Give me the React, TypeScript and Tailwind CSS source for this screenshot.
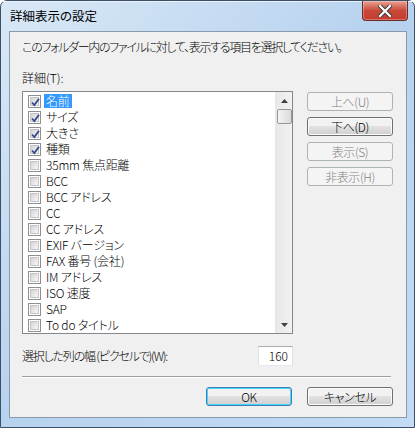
import React from 'react';

const FONT = { fontFamily: '"Noto Sans CJK JP", "Liberation Sans", sans-serif', fontFeatureSettings: '"palt"' };

const ITEMS: { label: string; checked: boolean }[] = [
  { label: '名前', checked: true },
  { label: 'サイズ', checked: true },
  { label: '大きさ', checked: true },
  { label: '種類', checked: true },
  { label: '35mm 焦点距離', checked: false },
  { label: 'BCC', checked: false },
  { label: 'BCC アドレス', checked: false },
  { label: 'CC', checked: false },
  { label: 'CC アドレス', checked: false },
  { label: 'EXIF バージョン', checked: false },
  { label: 'FAX 番号 (会社)', checked: false },
  { label: 'IM アドレス', checked: false },
  { label: 'ISO 速度', checked: false },
  { label: 'SAP', checked: false },
  { label: 'To do タイトル', checked: false },
];

function CheckBox({ checked }: { checked: boolean }) {
  return (
    <div className="w-[13px] h-[13px] border border-[#8f8f8f] bg-white p-px shrink-0">
      <div className="relative w-full h-full border border-[#c4c4c4] bg-gradient-to-br from-[#d4d4d4] to-[#f7f7f7]">
        {checked && (
          <svg className="absolute -left-px -top-px" width="11" height="11" viewBox="0 0 11 11">
            <path d="M2 5.5 L4.3 8 L9 1.8" stroke="#33488f" strokeWidth="1.8" fill="none" />
          </svg>
        )}
      </div>
    </div>
  );
}

function Button({ label, disabled, isDefault, className }: { label: string; disabled?: boolean; isDefault?: boolean; className?: string }) {
  if (disabled) {
    return (
      <div className={`h-[19px] w-[86px] rounded-[3px] border border-[#adb2b5] bg-[#f4f4f4] flex items-center justify-center text-[12px] text-[#838383] tracking-[-0.4px] ${className ?? ''}`}>
        {label}
      </div>
    );
  }
  return (
    <div
      className={`h-[19px] w-[86px] rounded-[3px] border ${isDefault ? 'border-[#3c7fb1] shadow-[inset_0_0_0_1px_#48d2ff]' : 'border-[#707070] shadow-[inset_0_0_0_1px_#fcfcfc]'} bg-gradient-to-b from-[#f2f2f2] from-45% via-[#e2e2e2] via-50% to-[#cfcfcf] flex items-center justify-center text-[12px] text-black tracking-[-0.4px] ${className ?? ''}`}
    >
      {label}
    </div>
  );
}

export default function App() {
  return (
    <div className="w-[415px] h-[428px] bg-white">
      <div
        className="w-[415px] h-[428px] rounded-t-[7px] border border-[#3c4f66] bg-gradient-to-br from-[#d9e8f6] via-[#b7d2ef] to-[#c3dbf4] flex flex-col text-[12px] text-black font-light"
        style={FONT}
      >
        {/* title bar */}
        <div className="h-[30px] flex items-start justify-between pl-[9px] pr-[6px] shadow-[inset_0_1px_0_#eaf3fc]">
          <span className="mt-[7px] text-[12.5px] leading-[16px] font-normal">詳細表示の設定</span>
          <div className="w-[46px] h-[20px] rounded-b-[4px] border border-t-0 border-[#6e2a25] bg-gradient-to-b from-[#e8a293] via-[#c8483a] to-[#c43c2e] flex items-center justify-center shadow-[inset_0_0_0_1px_rgba(255,255,255,0.3)]">
            <svg width="14" height="12" viewBox="0 0 14 12">
              <path d="M2 1 L12 11 M12 1 L2 11" stroke="#3b3b3b" strokeWidth="4.2" strokeLinecap="square" />
              <path d="M2 1 L12 11 M12 1 L2 11" stroke="#ffffff" strokeWidth="2.2" strokeLinecap="square" />
            </svg>
          </div>
        </div>

        {/* client area */}
        <div className="ml-[8px] mr-[7px] h-[387px] border border-[#8a9aad] bg-[#f0f0f0] pl-[12px] pr-[12px]">
          <div className="mt-[7px] leading-[16px] tracking-[-1.3px] whitespace-nowrap">このフォルダー内のファイルに対して、表示する項目を選択してください。</div>
          <div className="mt-[15px] leading-[16px]">詳細(T):</div>

          <div className="mt-[5px] flex gap-[14px]">
            <div className="w-[271px] h-[243px] border border-[#828790] bg-white flex">
              <div className="flex-1 pt-px">
                {ITEMS.map((it, i) => (
                  <div key={it.label} className="h-[16px] flex items-center pl-[5px] gap-[3px]">
                    <CheckBox checked={it.checked} />
                    <span className={`px-[2px] leading-[14px] tracking-[-0.2px] ${i === 0 ? 'bg-[#3399ff] text-white' : ''}`}>{it.label}</span>
                  </div>
                ))}
              </div>
              <div className="w-[17px] bg-gradient-to-r from-[#e8e8e8] to-[#f2f2f2] border-l border-[#e6e6e6] flex flex-col items-center">
                <div className="h-[17px] flex items-center justify-center">
                  <svg width="7" height="4" viewBox="0 0 7 4"><path d="M3.5 0 L7 4 L0 4 Z" fill="#404040" /></svg>
                </div>
                <div className="w-[15px] h-[15px] rounded-[2px] border border-[#979797] bg-gradient-to-r from-[#f4f4f4] to-[#dadada]" />
                <div className="flex-1" />
                <div className="h-[17px] flex items-center justify-center">
                  <svg width="7" height="4" viewBox="0 0 7 4"><path d="M0 0 L7 0 L3.5 4 Z" fill="#404040" /></svg>
                </div>
              </div>
            </div>
            <div className="flex flex-col gap-[6px] pt-px">
              <Button label="上へ(U)" disabled />
              <Button label="下へ(D)" />
              <Button label="表示(S)" disabled />
              <Button label="非表示(H)" disabled />
            </div>
          </div>

          <div className="mt-[12px] flex items-center">
            <span className="w-[236px] leading-[16px] tracking-[-1.2px] whitespace-nowrap">選択した列の幅 (ピクセルで)(W):</span>
            <div className="w-[35px] h-[20px] border border-[#abadb3] border-l-[#e2e3ea] border-r-[#dbdfe6] border-b-[#e3e9ef] bg-white text-right pr-[4px] leading-[18px]">160</div>
          </div>

          <div className="mt-[10px] h-px bg-[#a0a0a0] mr-[3px] shadow-[0_1px_0_#ffffff]" />

          <div className="mt-[10px] flex justify-end gap-[15px] pr-px">
            <Button label="OK" isDefault className="w-[85px]" />
            <Button label="キャンセル" className="w-[86px]" />
          </div>
        </div>
      </div>
    </div>
  );
}
